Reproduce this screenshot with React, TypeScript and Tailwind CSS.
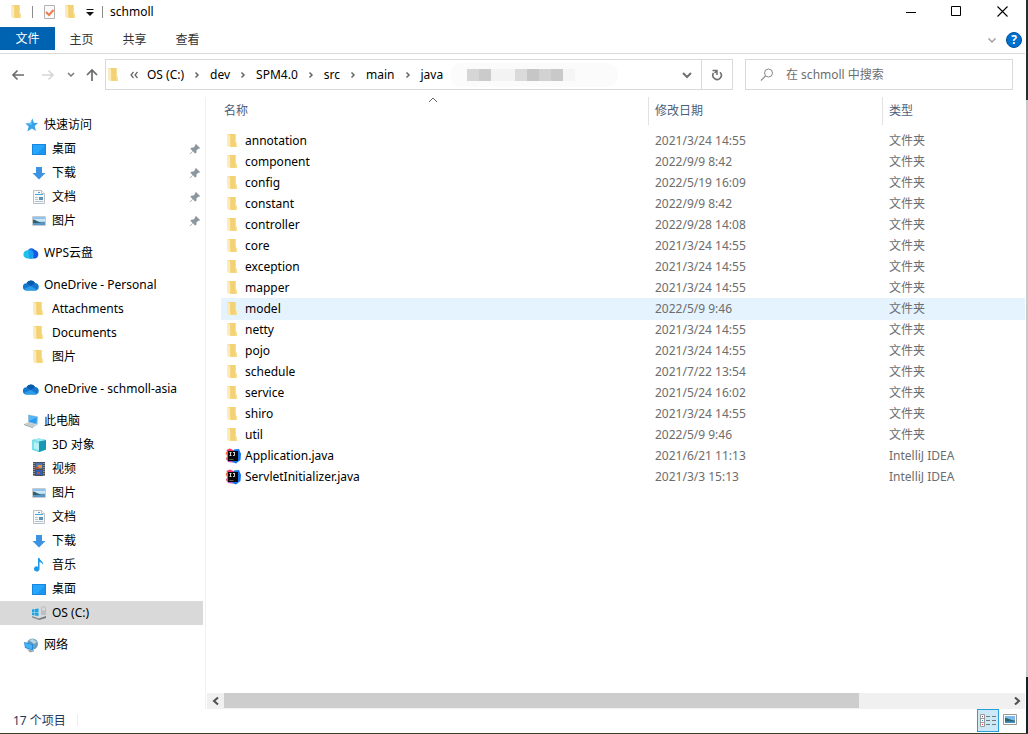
import React, { useState } from 'react';

type IconType =
  | 'star' | 'desktop' | 'download' | 'document' | 'picture' | 'wps' | 'onedrive' | 'folder'
  | 'pc' | 'cube' | 'video' | 'music' | 'drive' | 'network' | 'idea';

interface NavItem {
  id: string;
  label: string;
  icon: IconType;
  child?: boolean;
  pinned?: boolean;
}

interface FileItem {
  name: string;
  date: string;
  type: string;
  icon: IconType;
}

const NAV_GROUPS: NavItem[][] = [
  [
    { id: 'quick', label: '快速访问', icon: 'star' },
    { id: 'q-desktop', label: '桌面', icon: 'desktop', child: true, pinned: true },
    { id: 'q-download', label: '下载', icon: 'download', child: true, pinned: true },
    { id: 'q-document', label: '文档', icon: 'document', child: true, pinned: true },
    { id: 'q-picture', label: '图片', icon: 'picture', child: true, pinned: true },
  ],
  [{ id: 'wps', label: 'WPS云盘', icon: 'wps' }],
  [
    { id: 'od', label: 'OneDrive - Personal', icon: 'onedrive' },
    { id: 'od-att', label: 'Attachments', icon: 'folder', child: true },
    { id: 'od-doc', label: 'Documents', icon: 'folder', child: true },
    { id: 'od-pic', label: '图片', icon: 'folder', child: true },
  ],
  [{ id: 'od-asia', label: 'OneDrive - schmoll-asia', icon: 'onedrive' }],
  [
    { id: 'pc', label: '此电脑', icon: 'pc' },
    { id: 'pc-3d', label: '3D 对象', icon: 'cube', child: true },
    { id: 'pc-video', label: '视频', icon: 'video', child: true },
    { id: 'pc-picture', label: '图片', icon: 'picture', child: true },
    { id: 'pc-document', label: '文档', icon: 'document', child: true },
    { id: 'pc-download', label: '下载', icon: 'download', child: true },
    { id: 'pc-music', label: '音乐', icon: 'music', child: true },
    { id: 'pc-desktop', label: '桌面', icon: 'desktop', child: true },
    { id: 'pc-c', label: 'OS (C:)', icon: 'drive', child: true },
  ],
  [{ id: 'network', label: '网络', icon: 'network' }],
];

const folder = (name: string, date: string): FileItem => ({ name, date, type: '文件夹', icon: 'folder' });

const FILES: FileItem[] = [
  folder('annotation', '2021/3/24 14:55'),
  folder('component', '2022/9/9 8:42'),
  folder('config', '2022/5/19 16:09'),
  folder('constant', '2022/9/9 8:42'),
  folder('controller', '2022/9/28 14:08'),
  folder('core', '2021/3/24 14:55'),
  folder('exception', '2021/3/24 14:55'),
  folder('mapper', '2021/3/24 14:55'),
  folder('model', '2022/5/9 9:46'),
  folder('netty', '2021/3/24 14:55'),
  folder('pojo', '2021/3/24 14:55'),
  folder('schedule', '2021/7/22 13:54'),
  folder('service', '2021/5/24 16:02'),
  folder('shiro', '2021/3/24 14:55'),
  folder('util', '2022/5/9 9:46'),
  { name: 'Application.java', date: '2021/6/21 11:13', type: 'IntelliJ IDEA', icon: 'idea' },
  { name: 'ServletInitializer.java', date: '2021/3/3 15:13', type: 'IntelliJ IDEA', icon: 'idea' },
];

const CRUMBS = ['OS (C:)', 'dev', 'SPM4.0', 'src', 'main', 'java'];

const FolderIcon = () => (
  <svg viewBox="0 0 16 16" className="h-4 w-4 shrink-0">
    <path d="M2.500 1h8v9H12v4H6l-3.500-1z" fill="#f6d888" />
    <path d="M5 1h5.500v9H12v3.500H6z" fill="#f3d276" />
    <path d="M2.500 1L5 2.500v12L2.500 13z" fill="#fcebbd" />
    <path d="M10.500 9.500H12v4h-1.500z" fill="#f9df98" />
  </svg>
);

const Icon: React.FC<{ type: IconType }> = ({ type }) => {
  const cls = 'h-4 w-4 shrink-0';
  switch (type) {
    case 'star':
      return (
        <svg viewBox="0 0 16 16" className={cls}>
          <path d="M9.500 1.500l1.300 4.200 4.200.2-3.300 3 1.200 5.100-4-2.600-4.500 3.200 1.300-5.200L2.500 6.500l4.700-.6z" fill="#38a3ea" />
          <path d="M9.500 1.500l-1 6.800-6-1.800 4.700-.6z" fill="#63c0f7" />
        </svg>
      );
    case 'desktop':
      return (
        <svg viewBox="0 0 16 16" className={cls}>
          <path d="M1 3h14v11H1z" fill="#1688e0" />
          <path d="M2 4h12v9H2z" fill="#27a5fa" />
          <path d="M14 4v9H6z" fill="#1b97f1" />
        </svg>
      );
    case 'download':
      return (
        <svg viewBox="0 0 16 16" className={cls}>
          <path d="M5 2h6v6h3.500L8 14.500 1.500 8H5z" fill="#3c93e4" />
        </svg>
      );
    case 'document':
      return (
        <svg viewBox="0 0 16 16" className={cls}>
          <path d="M2.500 1.500h8l3 3v10h-11z" fill="#f6f8f9" stroke="#b9bfc3" />
          <path d="M10.500 1.500v3h3" fill="#fff" stroke="#b9bfc3" />
          <path d="M4 5.500h8M7 3.500h2" stroke="#4aa7e0" />
          <path d="M4 8.500h3M4 10.500h3M4 12.500h8" stroke="#b0c4d0" />
          <path d="M8 8h4v3H8z" fill="#5d92b4" />
        </svg>
      );
    case 'picture':
      return (
        <svg viewBox="0 0 16 16" className={cls}>
          <path d="M1.500 3.500h13v9h-13z" fill="#fff" stroke="#c8ccd0" />
          <path d="M2 4h12v8H2z" fill="#8fc3ee" />
          <path d="M2 6h12v2.500H2z" fill="#cfe5f5" />
          <path d="M2 6.500c3 .5 5 2.500 8 3H14v1H2z" fill="#335f66" />
          <path d="M2 10h12v2H2z" fill="#5597c8" />
        </svg>
      );
    case 'wps':
      return (
        <svg viewBox="0 0 16 16" className={cls}>
          <path d="M5 5.500a4 4 0 0 1 6.800-.5 4.400 4.400 0 0 1 .4 8.500H6z" fill="#1757e6" />
          <path d="M5 5.200A4.200 4.200 0 0 1 10.500 8l-.5 5.500H4.200a4 4 0 0 1 .8-8.300z" fill="#20bff0" />
          <path d="M5.500 4.500c3-1.500 4.500.5 5 4L9 13.500H6.500z" fill="#1a90f2" opacity=".7" />
        </svg>
      );
    case 'onedrive':
      return (
        <svg viewBox="0 0 16 16" className={cls}>
          <path d="M3.500 6.200A4.800 4.800 0 0 1 12 6a3.800 3.800 0 0 1 .8 7.500H3.500a3.600 3.600 0 0 1 0-7.300z" fill="#1578cf" />
          <path d="M3.500 6.200A4.800 4.800 0 0 1 12 6L8 9z" fill="#0a5aab" />
          <path d="M1 12c2-1 4-2 7-3l6 4-1 .5H3.500c-1 0-2-.5-2.500-1.500z" fill="#2b9ce8" />
        </svg>
      );
    case 'pc':
      return (
        <svg viewBox="0 0 16 16" className={cls}>
          <path d="M5 1.500l10 2-.5 8.500L5 9.500z" fill="#9ac4de" />
          <path d="M6 2.500l8 1.700-.5 6.500L6 8.700z" fill="#2b9df1" />
          <path d="M6 2.500l8 1.700L6 8z" fill="#55b7f8" />
          <path d="M1 11l4-1.500 9 2.500-4 2.500z" fill="#c6cbce" />
          <path d="M1 11l9 3.500v.8L1 12z" fill="#929a9f" />
        </svg>
      );
    case 'cube':
      return (
        <svg viewBox="0 0 16 16" className={cls}>
          <path d="M1 3l7-1.500L15 3v9.500L8 15l-7-2.500z" fill="#26bdd4" />
          <path d="M1 3l7 1.500V15l-7-2.500z" fill="#7be0ea" />
          <path d="M8 4.500L15 3v9.500L8 15z" fill="#1798b5" />
          <path d="M1 3l7-1.500L15 3 8 4.500z" fill="#a2e9f0" />
          <path d="M3 5l5 1.500v6.500l-5-1.500z" fill="#b8f1f5" />
        </svg>
      );
    case 'video':
      return (
        <svg viewBox="0 0 16 16" className={cls}>
          <path d="M2 1h12v14H2z" fill="#4a4d52" />
          <path d="M4.500 2h7v6h-7z" fill="#4a73b8" />
          <path d="M4.500 9h7v5h-7z" fill="#315fb1" />
          <path d="M7 4h4v3H6z" fill="#d89a45" />
          <path d="M5 6h3v2H5zM6 11h3v2H6z" fill="#bf5140" />
          <path d="M3 2v13M13 2v13" stroke="#ced0d1" strokeDasharray="1 1" />
        </svg>
      );
    case 'music':
      return (
        <svg viewBox="0 0 16 16" className={cls}>
          <path d="M7 1h1.500c.5 3 4 3 3.700 7-.7-2-2-2.500-3.700-3v7A2.800 2.500 0 1 1 7 9.800z" fill="#1f98ea" />
        </svg>
      );
    case 'drive':
      return (
        <svg viewBox="0 0 16 16" className={cls}>
          <path d="M8 8l5-1 2 1v5l-7 2-7-3v-1z" fill="#d6dadc" />
          <path d="M1 11l7 2.500V15l-7-2.500z" fill="#858d91" />
          <path d="M8 13.500L15 11v2l-7 2z" fill="#71787c" />
          <path d="M1 4.500L3.500 4v3H1zM4 4l3.500-.5V7H4zM1 7.500h2.500v3L1 10zM4 7.500h3.500V11L4 10.500z" fill="#16a6e9" />
          <path d="M10.500 6V3.500a2 2 0 0 1 4 0V6" fill="none" stroke="#b4babd" />
          <path d="M10 5.500h5V10h-5z" fill="#b9bfc2" />
        </svg>
      );
    case 'network':
      return (
        <svg viewBox="0 0 16 16" className={cls}>
          <circle cx="9.500" cy="7" r="5.500" fill="#6d9dba" />
          <path d="M6 3l4-1 4 3-3 2z" fill="#b9d4e2" />
          <path d="M1 5l9 2v6.500L2 11z" fill="#218cdc" />
          <path d="M2 6l7 1.700v4.500l-6.500-2z" fill="#48b2f6" />
          <path d="M4 12l6 1.500 1-1v2l-4 1z" fill="#9ba6ad" />
        </svg>
      );
    case 'idea':
      return (
        <svg viewBox="0 0 16 16" className={cls}>
          <path d="M.5 5L4 .8l5 4.200-3 9.500-5-3L2 8z" fill="#fc6a3c" />
          <path d="M1.500 2L5 .5l6 3-7 4z" fill="#f3386b" />
          <path d="M9 1.500l5-.5 2 5-.5 6-4.500 3.500L4 13z" fill="#1574e8" />
          <path d="M1 10l4-1 3 5.500-5-.5z" fill="#b454c0" />
          <path d="M3 3h10v10H3z" fill="#0c0709" />
          <path d="M4.500 4.500h2M5.500 4.500v3M4.500 7.500h2M8 4.500h2M9.500 4.500v3H8" fill="none" stroke="#e8e8e8" strokeWidth=".9" />
          <path d="M4.500 11.500h4" stroke="#777" strokeWidth=".8" />
        </svg>
      );
    default:
      return <FolderIcon />;
  }
};

const PinIcon = () => (
  <svg viewBox="0 0 12 12" className="h-3 w-3 shrink-0">
    <path d="M7 1l4 4-1 1-.8-.2L7.500 7.500 7.300 10 6 10.500 4 8.300 1.500 11H1v-.5L3.700 8 1.500 6l.5-1.300 2.500-.2L6.200 2.800 6 2z" fill="#8b969e" />
  </svg>
);

const Chevron: React.FC<{ dir: 'right' | 'up' | 'down'; className?: string }> = ({ dir, className }) => {
  const paths = {
    right: 'M3.500 2.500L6 5 3.500 7.500',
    up: 'M1 7l4-4 4 4',
    down: 'M1.500 3.500L5 7l3.500-3.500',
  };
  return (
    <svg viewBox="0 0 10 10" className={`h-[10px] w-[10px] shrink-0 ${className ?? ''}`}>
      <path d={paths[dir]} fill="none" stroke="currentColor" strokeWidth={dir === 'up' ? 1 : 1.5} />
    </svg>
  );
};

const TitleBar = () => (
  <header className="flex h-[27px] items-start">
    <div className="flex h-[23px] flex-1 items-center">
      <span className="ml-[9px] flex"><FolderIcon /></span>
      <span className="ml-[7px] h-3 w-px bg-[#8c8c8c]" />
      <button aria-label="属性" className="ml-2">
        <svg viewBox="0 0 16 16" className="h-4 w-4">
          <path d="M3.500 1.500h10v13h-10z" fill="#fafafa" stroke="#b3b3b3" />
          <path d="M5 8l3 3 4.500-5" fill="none" stroke="#ee7d4b" strokeWidth="2" />
        </svg>
      </button>
      <button aria-label="新建文件夹" className="ml-[6px]"><FolderIcon /></button>
      <button aria-label="自定义快速访问工具栏" className="ml-[6px]">
        <svg viewBox="0 0 10 10" className="h-[10px] w-[10px]">
          <path d="M1.500 2.500h7" stroke="#111" />
          <path d="M1 5h8L5 9z" fill="#111" />
        </svg>
      </button>
      <span className="ml-[7px] h-3 w-px bg-[#8c8c8c]" />
      <h1 className="ml-[7px]">schmoll</h1>
    </div>
    <div className="flex">
      <button aria-label="最小化" className="flex h-6 w-[46px] items-center justify-center">
        <svg viewBox="0 0 11 11" className="h-[11px] w-[11px]"><path d="M0 5.500h10" stroke="#000" /></svg>
      </button>
      <button aria-label="最大化" className="flex h-[23px] w-[45px] items-center justify-center">
        <svg viewBox="0 0 11 11" className="h-[11px] w-[11px]"><path d="M.5 .5h9v9h-9z" fill="none" stroke="#000" /></svg>
      </button>
      <button aria-label="关闭" className="flex h-[23px] w-[46px] items-center justify-center">
        <svg viewBox="0 0 11 11" className="h-[11px] w-[11px]"><path d="M.5 .5l10 10M10.500 .5l-10 10" stroke="#000" strokeWidth="1.100" /></svg>
      </button>
    </div>
  </header>
);

const Ribbon = () => (
  <nav className="flex h-[27px] items-start border-b border-[#dadbdc]">
    <button className="h-[23px] w-[55px] bg-[#0063b1] text-white">文件</button>
    {['主页', '共享', '查看'].map(tab => (
      <button key={tab} className="h-[26px] w-[53px] text-[#333]">{tab}</button>
    ))}
    <div className="ml-auto flex h-[26px] items-center gap-[9px] pr-[3px]">
      <button aria-label="展开功能区"><Chevron dir="down" className="text-[#a0a0a0]" /></button>
      <button aria-label="帮助" className="flex h-4 w-4 items-center justify-center rounded-full border border-[#004f9e] bg-[#0070d0] text-[12px] font-bold text-white">?</button>
    </div>
  </nav>
);

const AddressRow = () => (
  <div className="flex h-[43px] items-start pt-[5px] pr-3">
    <div className="flex h-[31px] w-[105px] shrink-0 items-center pl-[11px]">
      <button aria-label="后退">
        <svg viewBox="0 0 14 14" className="h-[14px] w-[14px]"><path d="M13 7H2M6.500 2.500L2 7l4.500 4.500" fill="none" stroke="#6b6b6b" strokeWidth="1.600" /></svg>
      </button>
      <button aria-label="前进" className="ml-4">
        <svg viewBox="0 0 14 14" className="h-[14px] w-[14px]"><path d="M1 7h11M7.500 2.500L12 7l-4.500 4.500" fill="none" stroke="#d6d6d6" strokeWidth="1.600" /></svg>
      </button>
      <button aria-label="最近浏览的位置" className="ml-3">
        <svg viewBox="0 0 8 8" className="h-2 w-2"><path d="M1 2l3 3 3-3" fill="none" stroke="#777" strokeWidth="1.500" /></svg>
      </button>
      <button aria-label="上移" className="ml-[10px]">
        <svg viewBox="0 0 14 14" className="h-[14px] w-[14px]"><path d="M7 13V2M2 7l5-5 5 5" fill="none" stroke="#6b6b6b" strokeWidth="1.700" /></svg>
      </button>
    </div>
    <div className="flex h-[31px] min-w-0 flex-1 items-center border border-[#d9d9d9]">
      <span className="flex"><FolderIcon /></span>
      <svg viewBox="0 0 10 10" className="mr-2 ml-[7px] h-[10px] w-[10px] shrink-0">
        <path d="M4.500 2L2 5l2.500 3M8.500 2L6 5l2.500 3" fill="none" stroke="#666" strokeWidth="1.200" />
      </svg>
      {CRUMBS.map((crumb, i) => (
        <React.Fragment key={crumb}>
          {i > 0 && <span className="flex w-[26px] shrink-0 justify-center text-[#666]"><Chevron dir="right" /></span>}
          <a href="#" className="whitespace-nowrap">{crumb}</a>
        </React.Fragment>
      ))}
      <div className="ml-[7px] flex h-6 w-[168px] items-center rounded-full bg-[#fbfbfb] pl-[17px]">
        <span className="h-3 w-3 bg-[#d6d6d6]" />
        <span className="h-3 w-3 bg-[#cbcbcb]" />
        <span className="h-3 w-6 bg-[#f3f3f3]" />
        <span className="h-3 w-3 bg-[#dadada]" />
        <span className="h-3 w-3 bg-[#c6c6c6]" />
        <span className="h-3 w-3 bg-[#d2d2d2]" />
        <span className="h-3 w-3 bg-[#c9c9c9]" />
        <span className="h-3 w-3 bg-[#f5f5f5]" />
      </div>
      <button aria-label="以前的位置" className="ml-auto flex h-full w-[29px] items-center justify-center">
        <svg viewBox="0 0 10 10" className="h-[10px] w-[10px]"><path d="M1 3l4 4 4-4" fill="none" stroke="#707070" strokeWidth="2" /></svg>
      </button>
      <button aria-label="刷新" className="flex h-full w-[31px] items-center justify-center border-l border-[#d9d9d9]">
        <svg viewBox="0 0 12 12" className="h-3 w-3">
          <path d="M9 3.200A4.200 4.200 0 1 1 2.500 4" fill="none" stroke="#707070" strokeWidth="1.600" />
          <path d="M1.500 1.500H6V6M6 1.800L3.500 4" fill="none" stroke="#707070" strokeWidth="1.500" />
        </svg>
      </button>
    </div>
    <label className="ml-3 flex h-[31px] w-[268px] shrink-0 items-center border border-[#d9d9d9] pl-[14px]">
      <svg viewBox="0 0 14 14" className="h-[14px] w-[14px] shrink-0">
        <circle cx="8.500" cy="5" r="4" fill="none" stroke="#8a8a8a" />
        <path d="M5.500 8L1 12.500" stroke="#8a8a8a" strokeWidth="1.200" />
      </svg>
      <input type="text" aria-label="搜索" placeholder="在 schmoll 中搜索" className="ml-3 min-w-0 flex-1 outline-none placeholder:text-[#6d6d6d]" />
    </label>
  </div>
);

const Sidebar = () => {
  const [selected, setSelected] = useState('pc-c');

  return (
    <aside className="w-[206px] shrink-0 border-r border-[#f0f0f0] pt-4 pr-[2px]">
      {NAV_GROUPS.map(group => (
        <ul key={group[0].id} className="mb-2">
          {group.map(item => (
            <li key={item.id}>
              <a
                href="#"
                onClick={() => setSelected(item.id)}
                className={`flex h-6 items-center gap-[5px] pr-[2px] ${item.child ? 'pl-[31px]' : 'pl-[23px]'} ${
                  selected === item.id ? 'bg-[#d9d9d9]' : ''
                }`}
              >
                <Icon type={item.icon} />
                <span className="flex-1 whitespace-nowrap">{item.label}</span>
                {item.pinned && <PinIcon />}
              </a>
            </li>
          ))}
        </ul>
      ))}
    </aside>
  );
};

const FileList = () => {
  const [active, setActive] = useState('model');

  return (
    <main className="flex min-w-0 flex-1 flex-col">
      <div className="flex-1 overflow-hidden pl-[15px]">
        <table className="w-full table-fixed border-collapse text-left">
          <thead>
            <tr className="h-[33px] align-top text-[#4c607a]">
              <th className="relative w-[427px] p-0 font-normal">
                <button className="h-7 pl-[3px]">名称</button>
                <Chevron dir="up" className="absolute top-[-2px] left-[207px] text-[#666]" />
              </th>
              <th className="w-[234px] p-0 font-normal">
                <button className="h-7 w-full border-l border-[#e2e2e2] pl-[6px] text-left">修改日期</button>
              </th>
              <th className="p-0 font-normal">
                <button className="h-7 w-full border-l border-[#e2e2e2] pl-[6px] text-left">类型</button>
              </th>
            </tr>
          </thead>
          <tbody>
            {FILES.map(file => (
              <tr
                key={file.name}
                onClick={() => setActive(file.name)}
                className={`h-[21px] text-[#6d6d6d] ${active === file.name ? 'bg-[#e5f3ff] shadow-[0_1px_0_#e5f3ff]' : ''}`}
              >
                <td className="p-0">
                  <div className="flex h-[21px] items-center gap-1 pl-1 text-black">
                    <Icon type={file.icon} />
                    <span>{file.name}</span>
                  </div>
                </td>
                <td className="p-0 pl-[7px]">{file.date}</td>
                <td className="p-0 pl-[7px]">{file.type}</td>
              </tr>
            ))}
          </tbody>
        </table>
      </div>
      <div className="ml-px flex h-4 bg-[#f0f0f0]">
        <button aria-label="向左滚动" className="flex w-[17px] items-center justify-center">
          <svg viewBox="0 0 10 10" className="h-[10px] w-[10px]"><path d="M7 1.500L3 5l4 3.500" fill="none" stroke="#505050" strokeWidth="2" /></svg>
        </button>
        <div className="flex-1">
          <div className="h-[15px] w-[81%] bg-[#cdcdcd]" />
        </div>
        <button aria-label="向右滚动" className="flex w-[17px] items-center justify-center">
          <svg viewBox="0 0 10 10" className="h-[10px] w-[10px]"><path d="M3 1.500L7 5 3 8.500" fill="none" stroke="#505050" strokeWidth="2" /></svg>
        </button>
      </div>
    </main>
  );
};

const StatusBar = () => (
  <footer className="flex h-6 items-start pl-[13px]">
    <span className="leading-6 text-[#1e395b]">{FILES.length} 个项目</span>
    <span className="mt-[5px] ml-[11px] h-3 w-px bg-[#eee]" />
    <div className="ml-auto flex items-start pr-2">
      <button aria-label="详细信息" className="flex h-[23px] w-[22px] items-center justify-center border border-[#26a0da] bg-[#cbe8f6]">
        <svg viewBox="0 0 16 14" className="h-[14px] w-4">
          <path d="M.5 .5h4v12h-4zM.5 4.500h4M.5 8.500h4" fill="#fff" stroke="#9a9a9a" />
          <path d="M6 2.500h4M12 2.500h4M6 6.500h4M12 6.500h4M6 10.500h4M12 10.500h4" stroke="#777" />
          <path d="M2 2h1v1H2z" fill="#555" />
          <path d="M2 6h1v1H2z" fill="#2f8fe0" />
          <path d="M2 10h1v1H2z" fill="#d33" />
        </svg>
      </button>
      <button aria-label="大图标" className="mt-[5px] ml-1">
        <svg viewBox="0 0 14 11" className="h-[11px] w-[14px]">
          <path d="M.5 .5h13v10H.5z" fill="#fff" stroke="#9a9a9a" />
          <path d="M2 2h10v7H2z" fill="#7db9ec" />
          <path d="M2 4c3 0 5 2 10 2.500V8H2z" fill="#2c6470" />
          <path d="M2 7.500h10V9H2z" fill="#4a8fc4" />
        </svg>
      </button>
    </div>
  </footer>
);

// Slice of the desktop that shows beside the window
const DesktopEdge = () => (
  <div className="flex w-[2px] shrink-0 flex-col bg-[#c9c9c9]">
    <div className="h-[100px] bg-[#26302a]" />
    <div className="flex-1" />
    <div className="h-14 bg-[#13222a]" />
  </div>
);

const App: React.FC = () => (
  <div className="flex min-h-screen border-b border-[#3b4226] font-['Noto_Sans','Noto_Sans_CJK_SC',sans-serif] text-[12px] leading-4 text-black">
    <div className="flex min-w-0 flex-1 flex-col bg-white pr-px">
      <TitleBar />
      <Ribbon />
      <AddressRow />
      <div className="flex flex-1">
        <Sidebar />
        <FileList />
      </div>
      <StatusBar />
    </div>
    <DesktopEdge />
  </div>
);

export default App;
